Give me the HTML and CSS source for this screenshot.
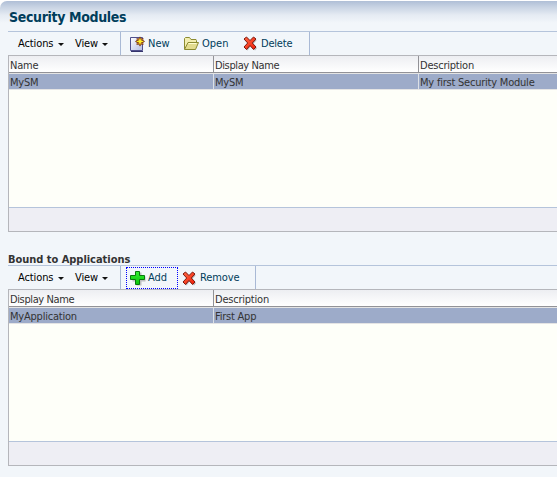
FILE: index.html
```
<!DOCTYPE html>
<html lang="en">
<head>
<meta charset="utf-8">
<title>Security Modules</title>
<link rel="stylesheet" href="styles.css">
</head>
<body>
<svg class="defs" width="0" height="0">
  <defs>
    <linearGradient id="red" x2="1" y2="1"><stop stop-color="#ff6a45"/><stop offset="1" stop-color="#f01c08"/></linearGradient>
    <linearGradient id="green" x2="0" y2="1"><stop stop-color="#35ef35"/><stop offset="1" stop-color="#08c408"/></linearGradient>
    <linearGradient id="page" x2="1" y2="1"><stop stop-color="#fff"/><stop offset="1" stop-color="#b4bde4"/></linearGradient>
    <symbol id="cross" viewBox="0 0 15 15"><path d="M4.500 2.500 8 6 12 2l1.500 2.500L10 8l4 4-2 2.500L8 10l-3.500 4.500-2.500-2L6 8z" fill="#888" opacity=".6"/><path d="M3.500 1 7 4.500 10.500 1 13 3 9.300 7l3.700 4-2.500 2.500L7 9.500 3.500 13.500 1 11l3.700-4L1 3z" fill="url(#red)" stroke="#7d170c"/></symbol>
  </defs>
</svg>
<main class="panel">
  <h1>Security Modules</h1>
  <section>
    <div class="toolbar">
      <div class="menus"><span class="menu actions">Actions</span><i class="arrow"></i><span class="menu view">View</span><i class="arrow"></i></div>
      <div class="tools tools-top">
        <button class="tool new"><svg width="16" height="16"><path d="M1.500 1.500h12v13h-12z" fill="url(#page)" stroke="#50508c"/><path d="M2 15.500h12" fill="none" stroke="#34346c"/><path d="m11 .5 1.500 2 2-.5-.3 2L16 5.500l-1.800 1.300.3 2.200-2-.5L11 10.500l-1.500-2-2 .5.3-2.200L6 5.500 7.800 4l-.3-2 2 .5z" fill="#7b371c"/><path d="m11 1.500 1 2.800 3 1.200-3 1-1 3-1-3-3-1 3-1.200z" fill="#ffed26"/><path d="M8.500 3h1v1h-1zm4 0h1v1h-1zm-4 4h1v1h-1zm4 0h1v1h-1z" fill="#f2a52b"/></svg><span>New</span></button>
        <button class="tool open"><svg width="17" height="15"><path d="M1.500 13V2.500l1-1h4l1.500 2h5l.5 1v3" fill="#f3eeb0" stroke="#8c8b31"/><path d="M1.500 13.500 5 6.500h10.500l-3 7z" fill="#e3dc8e" stroke="#8c8b31"/><path d="M5.500 7.500h8" stroke="#fffed3"/></svg><span>Open</span></button>
        <button class="tool delete"><svg width="15" height="15"><use href="#cross"/></svg><span>Delete</span></button>
      </div>
    </div>
    <div class="table">
      <div class="row head three"><span>Name</span><span class="tight">Display Name</span><span>Description</span></div>
      <div class="row selected three"><span>MySM</span><span>MySM</span><span>My first Security Module</span></div>
      <div class="blank"></div>
      <div class="foot"></div>
    </div>
  </section>
  <section class="bound">
    <h2>Bound to Applications</h2>
    <div class="toolbar">
      <div class="menus"><span class="menu actions">Actions</span><i class="arrow"></i><span class="menu view">View</span><i class="arrow"></i></div>
      <div class="tools tools-bottom">
        <button class="tool add"><svg width="16" height="16"><path d="M6.500 2.500h5v4h4v5h-4v4h-5v-4h-4v-5h4z" fill="#999" opacity=".6"/><path d="M5.500 1.500h4v4h5v4h-5v5h-4v-5h-5v-4h5z" fill="url(#green)" stroke="#08780d"/></svg><span>Add</span></button>
        <button class="tool remove"><svg width="15" height="15"><use href="#cross"/></svg><span>Remove</span></button>
      </div>
    </div>
    <div class="table">
      <div class="row head two"><span class="tight">Display Name</span><span>Description</span></div>
      <div class="row selected two"><span>MyApplication</span><span>First App</span></div>
      <div class="blank"></div>
      <div class="foot"></div>
    </div>
  </section>
</main>
</body>
</html>
```
FILE: styles.css
```
* { box-sizing: border-box; }
body {
  margin: 0;
  height: 477px;
  overflow: hidden;
  background: #fff;
  color: #333;
  font: 11px/16px "DejaVu Sans Condensed", "DejaVu Sans", sans-serif;
  font-stretch: condensed;
}
.defs { display: block; height: 0; }
.panel {
  height: 476px;
  margin-top: 1px;
  padding-left: 8px;
  border-top-left-radius: 7px;
  background: linear-gradient(#afbed6 0, #c8d3e3 6px, #e5ebf3 14px, #f2f6fa 22px);
}
h1 {
  height: 30px;
  margin: 0;
  padding: 0 0 0 1px;
  color: #003d5b;
  font-size: 14px;
  line-height: 32px;
  letter-spacing: -.35px;
}
h2 {
  height: 14px;
  margin: 0;
  font-size: 11px;
  line-height: 18px;
  letter-spacing: -.03px;
}
h1, h2 { white-space: nowrap; }
.toolbar { display: flex; height: 24px; border-top: 1px solid #b5c4db; }
.menus { display: flex; width: 112px; padding: 4px 0 0 10px; color: #000; letter-spacing: -.1px; }
.menu.actions { width: 40px; }
.menu.view { width: 27px; margin-left: 11px; }
.arrow {
  width: 6px;
  height: 3px;
  margin-top: 7px;
  background: #111;
  clip-path: polygon(0 0, 100% 0, 50% 100%);
}
.tools { display: flex; border: solid #a9b9d5; border-width: 0 1px; }
.tools-top { width: 190px; }
.tools-bottom { width: 136px; }
.tool {
  display: flex;
  align-items: center;
  height: 22px;
  margin: 0;
  padding: 0;
  border: 0;
  background: none;
  color: #003d5b;
  font: inherit;
  white-space: nowrap;
}
.tool svg { flex: none; }
.tools-top .tool span { padding-top: 1px; }
.new { width: 53px; padding-left: 8px; gap: 3px; }
.tool.new svg { margin-top: 1px; }
.open { width: 61px; padding-left: 9px; gap: 2px; }
.delete { padding-left: 8px; gap: 3px; letter-spacing: -.2px; }
.tool.add { width: 52px; margin: 1px 0 0 5px; padding-left: 3px; gap: 2px; border: 1px dotted #00f; }
.tool.remove { padding-left: 4px; gap: 3px; margin-top: 1px; letter-spacing: -.1px; }
.table {
  display: flex;
  flex-direction: column;
  height: 177px;
  border: solid #b5b6bb;
  border-width: 1px 0 1px 1px;
  background: #fefff9;
}
.row { display: grid; white-space: nowrap; letter-spacing: -.22px; }
.three { grid-template-columns: 204px 205px 1fr; }
.two { grid-template-columns: 204px 1fr; }
.head {
  height: 17px;
  border-bottom: 1px solid #929297;
  background: linear-gradient(#edeef2, #fff);
  line-height: 20px;
}
.head span { height: 16px; padding-left: 1px; }
.tight { letter-spacing: -.38px; }
.head span + span { border-left: 1px solid #929297; }
.selected { height: 17px; border: solid #e4e4e4; border-width: 1px 0; background: #9dabc9; line-height: 18px; }
.selected span { height: 15px; padding-left: 1px; }
.selected span + span { border-left: 1px solid #dce0e6; }
.blank { flex: 1; }
.foot { height: 24px; border-top: 1px solid #b5c4db; background: #eeeef4; }
.bound { margin-top: 19px; }
```
